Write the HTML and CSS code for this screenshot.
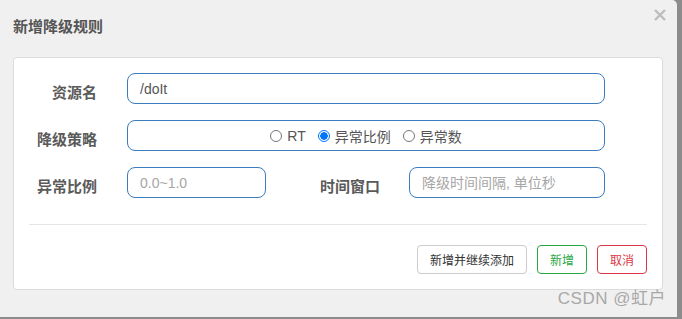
FILE: index.html
```html
<!DOCTYPE html>
<html>
  <head>
    <link rel="stylesheet" href="styles.css">
    <title>新增降级规则</title>
  </head>
  <body>
    <div class="modal">
      <div class="modal-header">
        <label class="modal-title">新增降级规则</label>
        <button class="close-btn">
          <svg width="12" height="12" viewBox="0 0 12 12">
            <path d="M1 1 L11 11 M11 1 L1 11" stroke="#bdbdbd" stroke-width="2.4" fill="none"/>
          </svg>
        </button>
      </div>

      <div class="modal-body">
        <div class="panel">
          <div class="form-row">
            <label class="ctrl-label">资源名</label>
            <input class="form-input input-wide" type="text" value="/doIt">
          </div>

          <div class="form-row">
            <label class="ctrl-label">降级策略</label>
            <div class="form-input input-wide radio-box">
              <label class="radio-item"><span class="radio"></span>RT</label>
              <label class="radio-item"><span class="radio checked"></span>异常比例</label>
              <label class="radio-item"><span class="radio"></span>异常数</label>
            </div>
          </div>

          <div class="form-row">
            <label class="ctrl-label">异常比例</label>
            <input class="form-input input-small" type="text" placeholder="0.0~1.0">
            <label class="ctrl-label label-second">时间窗口</label>
            <input class="form-input input-mid" type="text" placeholder="降级时间间隔, 单位秒">
          </div>

          <hr class="divider">

          <div class="actions">
            <button class="btn btn-default btn-long">新增并继续添加</button>
            <button class="btn btn-green">新增</button>
            <button class="btn btn-red">取消</button>
          </div>
        </div>
      </div>

      <span class="watermark">CSDN @虹户</span>
    </div>
  </body>
</html>
```

FILE: styles.css
```css
body {
  margin: 0;
  background: #8c8c8c;
  font-family: "Liberation Sans", "Noto Sans CJK SC", sans-serif;
}

.modal {
  position: relative;
  width: 677px;
  height: 317px;
  background: #f0f0f0;
  border-top-right-radius: 5px;
  overflow: hidden;
}

.modal-header {
  display: flex;
  align-items: center;
  justify-content: space-between;
  height: 57px;
  padding: 0 11px 0 13px;
  box-sizing: border-box;
}

.modal-title {
  font-size: 15px;
  font-weight: bold;
  color: #555;
  margin-top: -6px;
}

.close-btn {
  border: none;
  background: none;
  padding: 0;
  margin-top: -28px;
  line-height: 0;
  cursor: pointer;
}

.modal-body {
  padding: 0 14px 0 13px;
}

.panel {
  background: #fff;
  border: 1px solid #dcdcdc;
  border-radius: 4px;
  height: 233px;
  box-sizing: border-box;
  padding: 15px 15px 0 0;
}

.form-row {
  display: flex;
  align-items: center;
  margin-bottom: 16px;
}

.ctrl-label {
  width: 83px;
  margin-right: 30px;
  padding-top: 6px;
  text-align: right;
  font-size: 15px;
  font-weight: bold;
  color: #5a5a5a;
}

.label-second {
  width: 62px;
  margin-left: 52px;
  margin-right: 29px;
}

.form-input {
  height: 31px;
  box-sizing: border-box;
  border: 1px solid #3a7cbd;
  border-radius: 8px;
  padding: 0 12px;
  font-family: inherit;
  font-size: 14px;
  color: #555;
  outline: none;
}

.form-input::placeholder {
  color: #a6a6a6;
}

.input-wide {
  width: 478px;
}

.input-small {
  width: 139px;
}

.input-mid {
  width: 196px;
}

.radio-box {
  display: flex;
  align-items: center;
  justify-content: center;
  gap: 12px;
  padding-top: 1px;
  font-size: 14px;
  color: #555;
}

.radio-item {
  display: flex;
  align-items: center;
  gap: 5px;
}

.radio {
  width: 12px;
  height: 12px;
  box-sizing: border-box;
  border: 1px solid #767676;
  border-radius: 50%;
  background: #fff;
}

.radio.checked {
  border: 1px solid #0075ff;
  background: radial-gradient(circle, #0075ff 3.5px, #fff 4px);
}

.divider {
  border: none;
  border-top: 1px solid #e5e5e5;
  margin: 26px 0 20px 15px;
}

.actions {
  display: flex;
  justify-content: flex-end;
  gap: 10px;
}

.btn {
  height: 29px;
  width: 50px;
  border-radius: 4px;
  background: #fff;
  font-family: inherit;
  font-size: 12px;
  padding: 0;
  cursor: pointer;
}

.btn-long {
  width: 110px;
}

.btn-default {
  border: 1px solid #ccc;
  color: #333;
}

.btn-green {
  border: 1px solid #28a745;
  color: #28a745;
}

.btn-red {
  border: 1px solid #dc3545;
  color: #dc3545;
}

.watermark {
  position: absolute;
  right: 11px;
  bottom: 8px;
  font-size: 17px;
  color: #a8a8a8;
  letter-spacing: 0.5px;
}
```
